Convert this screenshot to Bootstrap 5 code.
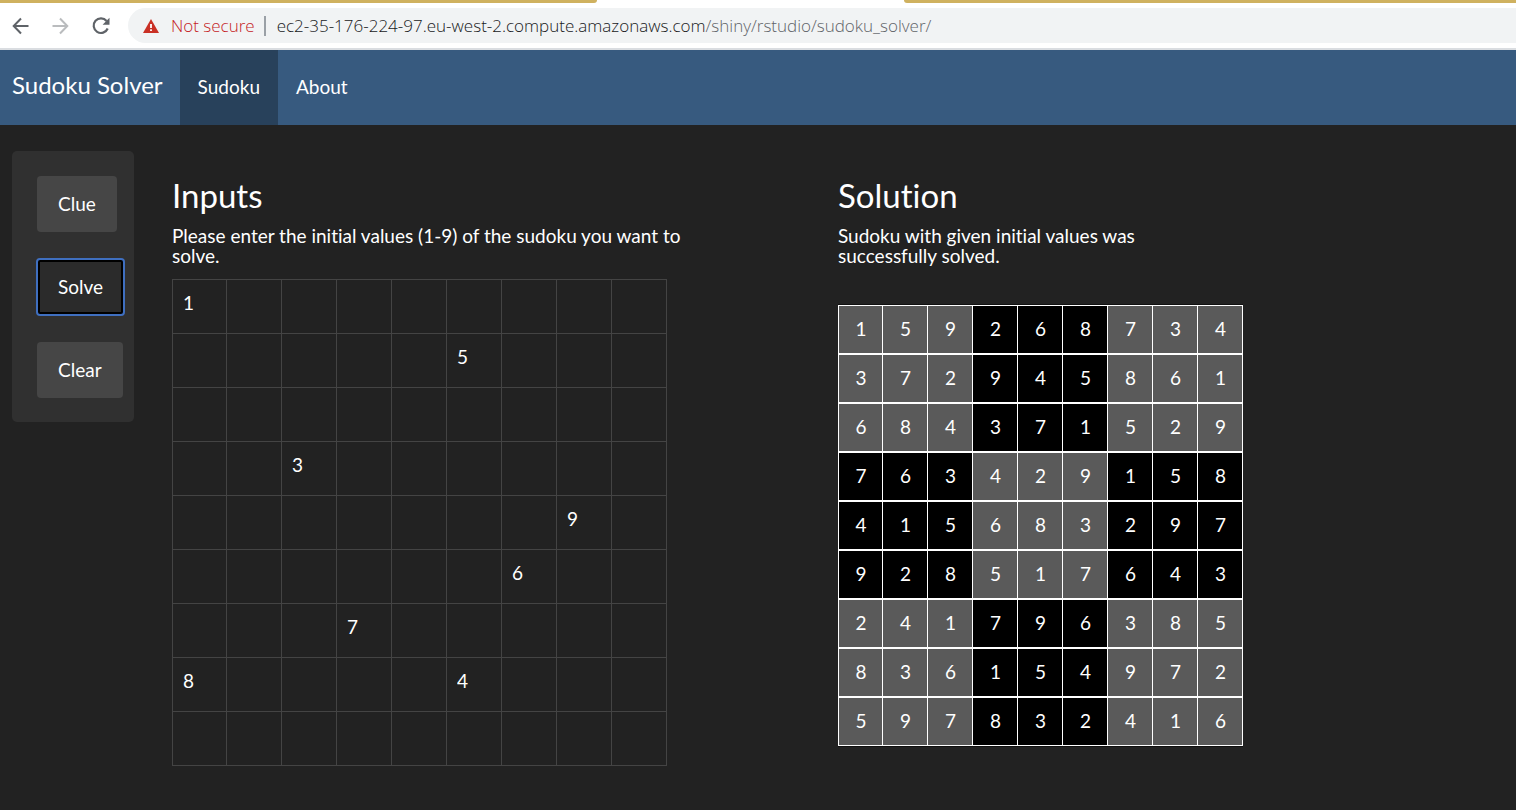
<!DOCTYPE html>
<html lang="en">
<head>
<meta charset="utf-8">
<meta name="viewport" content="width=device-width, initial-scale=1">
<title>Sudoku Solver</title>
<link href="https://cdn.jsdelivr.net/npm/bootstrap@5.3.0/dist/css/bootstrap.min.css" rel="stylesheet">
<style>
  body { background: #222; color: #fff; font-family: Lato, sans-serif; font-size: 19px; line-height: 20px; font-variant-ligatures: none; }

  /* browser chrome */
  .browser { background: #fff; border-bottom: 2px solid #dadde1; font-family: "Open Sans", sans-serif; font-size: 17px; font-weight: 350; }
  .tab-strip { height: 3px; }
  .tab-strip span { background: #cfb15f; }
  .strip-left { width: 39.4%; border-bottom-right-radius: 3px; }
  .strip-right { border-bottom-left-radius: 3px; }
  .open-tab { width: 307px; }
  .toolbar { padding: 5px 0 5px 12px; }
  .tool { width: 16px; height: 18px; margin-right: 24px; color: #5f6368; line-height: 0; }
  .tool:disabled { color: #babcbe; opacity: 1; border: 0; }
  .tool svg { display: block; }
  .omnibox { background: #f1f3f4; height: 35px; border-radius: 18px 0 0 18px; padding-left: 15px; margin-left: -4px; }
  .insecure { color: #c5221f; gap: 12px; font: inherit; line-height: 24px; }
  .divider { width: 2px; height: 20px; background: #9aa0a6; margin: 0 11px 0 9px; }
  .address { color: #18191b; }
  .address .path-part { color: #5f6368; }

  /* app */
  .app-bar { background: #375a7f; min-height: 75px; }
  .app-bar .navbar-brand { color: #fff; font-size: 24px; line-height: 24px; padding: 0 17px 6px 12px; margin: 0; }
  .app-bar .navbar-nav .nav-link { color: #fff; padding: 27px 18px 28px; }
  .app-bar .navbar-nav .nav-link.active { background: #28415b; color: #fff; }
  .page { padding: 26px 12px 44px; }
  .side { width: 122px; background: #303030; border-radius: 5px; padding: 25px 9px 24px 25px; gap: 27px; margin-right: 38px; }
  .side .btn { background: #464646; color: #fff; border: 0; border-radius: 4px; font-size: 19px; line-height: 20px; padding: 18px 21px; }
  .side .btn.active { background: #2b2b2b; color: #fff; box-shadow: inset 0 0 0 3px #000; outline: 2px solid #3f6fc0; outline-offset: -1px; border-radius: 3px; }
  h2 { font-size: 33px; line-height: 36px; font-weight: 400; margin: 26px 0 13px; }
  .note { margin: 0; }
  .entry-note { max-width: 516px; }
  .entry { margin-top: 13px; width: 495px; table-layout: fixed; border-collapse: collapse; }
  .entry td { border: 1px solid #444; padding: 0; height: 54px; }
  .entry td:first-child { width: 54px; }
  .entry input { display: block; width: 100%; height: 53px; border: 0; background: transparent; color: #fff; padding: 0 10px 8px; }
  .entry input:focus { outline: 2px solid #375a7f; }
  .answer { margin-top: 38px; width: 405px; table-layout: fixed; border-collapse: separate; border-spacing: 0; border-top: 1px solid #111; border-bottom: 1px solid #111; }
  .answer td { width: 45px; height: 49px; padding: 0 0 2px 1px; text-align: center; border: solid #fff; border-width: 1px 0 1px 1px; background: #000; }
  .answer td:first-child { width: 44px; }
  .answer td:last-child { width: 46px; border-right-width: 1px; }
  .answer td.shade { background: #5a5a5a; }
</style>
</head>
<body>
<header class="browser">
  <div class="tab-strip d-flex"><span class="strip-left"></span><div class="open-tab"></div><span class="strip-right flex-grow-1"></span></div>
  <div class="toolbar d-flex align-items-center">
    <button type="button" class="tool btn p-0 border-0" aria-label="Back"><svg width="17" height="18" viewBox="0 0 17 18" fill="none" stroke="currentColor" stroke-width="2"><path d="M16.500 9H2M9 1.500L1.700 9L9 16.500"/></svg></button>
    <button type="button" class="tool btn p-0" aria-label="Forward" disabled><svg width="17" height="18" viewBox="0 0 17 18" fill="none" stroke="currentColor" stroke-width="2"><path d="M.5 9H15M8 1.500L15.300 9L8 16.500"/></svg></button>
    <button type="button" class="tool btn p-0 border-0" aria-label="Reload"><svg width="18" height="18" viewBox="0 0 18 18" fill="none" stroke="currentColor" stroke-width="2.200"><path d="M14.600 4A7.300 7.300 0 1 0 15.700 11.500"/><path d="M17.500 .8V7.700H10.600Z" fill="currentColor" stroke="none"/></svg></button>
    <div class="omnibox d-flex align-items-center flex-grow-1">
      <button type="button" class="insecure btn p-0 border-0 d-flex align-items-center">
        <svg width="16" height="14" viewBox="0 0 16 14"><path fill="#c93025" d="M8 0L16 14H0Z"/><path stroke="#fff" stroke-width="1.800" d="M8 5V9M8 10.300V12"/></svg>
        Not secure</button>
      <span class="divider"></span>
      <div class="address text-nowrap">ec2-35-176-224-97.eu-west-2.compute.amazonaws.com<span class="path-part">/shiny/rstudio/sudoku_solver/</span></div>
    </div>
  </div>
</header>

<nav class="app-bar navbar navbar-expand p-0">
  <a class="navbar-brand" href="#">Sudoku Solver</a>
  <ul class="navbar-nav">
    <li class="nav-item"><a class="nav-link active" aria-current="page" href="#">Sudoku</a></li>
    <li class="nav-item"><a class="nav-link" href="#">About</a></li>
  </ul>
</nav>

<main class="page d-flex align-items-start">
  <aside class="side d-flex flex-column align-items-start flex-shrink-0">
    <button type="button" class="btn">Clue</button>
    <button type="button" class="btn active">Solve</button>
    <button type="button" class="btn">Clear</button>
  </aside>
  <div class="row g-0 flex-grow-1">
    <section class="col-6">
      <h2>Inputs</h2>
      <p class="note entry-note">Please enter the initial values (1-9) of the sudoku you want to solve.</p>
      <table class="entry"><tbody id="entry"></tbody></table>
    </section>
    <section class="col-6">
      <h2>Solution</h2>
      <p class="note w-50">Sudoku with given initial values was successfully solved.</p>
      <table class="answer"><tbody id="answer"></tbody></table>
    </section>
  </div>
</main>

<script src="https://cdn.jsdelivr.net/npm/bootstrap@5.3.0/dist/js/bootstrap.bundle.min.js"></script>
<script>
  const given = ["1........", ".....5...", ".........", "..3......", ".......9.", "......6..", "...7.....", "8....4...", "........."];
  const solved = ["159268734", "372945861", "684371529", "763429158", "415683297", "928517643", "241796385", "836154972", "597832416"];

  given.forEach((line, r) => {
    const row = document.getElementById("entry").insertRow();
    [...line].forEach((digit, c) => {
      const box = document.createElement("input");
      box.maxLength = 1;
      box.value = digit === "." ? "" : digit;
      box.setAttribute("aria-label", `Row ${r + 1}, column ${c + 1}`);
      row.insertCell().append(box);
    });
  });

  solved.forEach((line, r) => {
    const row = document.getElementById("answer").insertRow();
    [...line].forEach((digit, c) => {
      const cell = row.insertCell();
      cell.textContent = digit;
      // alternate 3x3 blocks are shaded
      if ((Math.floor(r / 3) + Math.floor(c / 3)) % 2 === 0) cell.className = "shade";
    });
  });
</script>
</body>
</html>
